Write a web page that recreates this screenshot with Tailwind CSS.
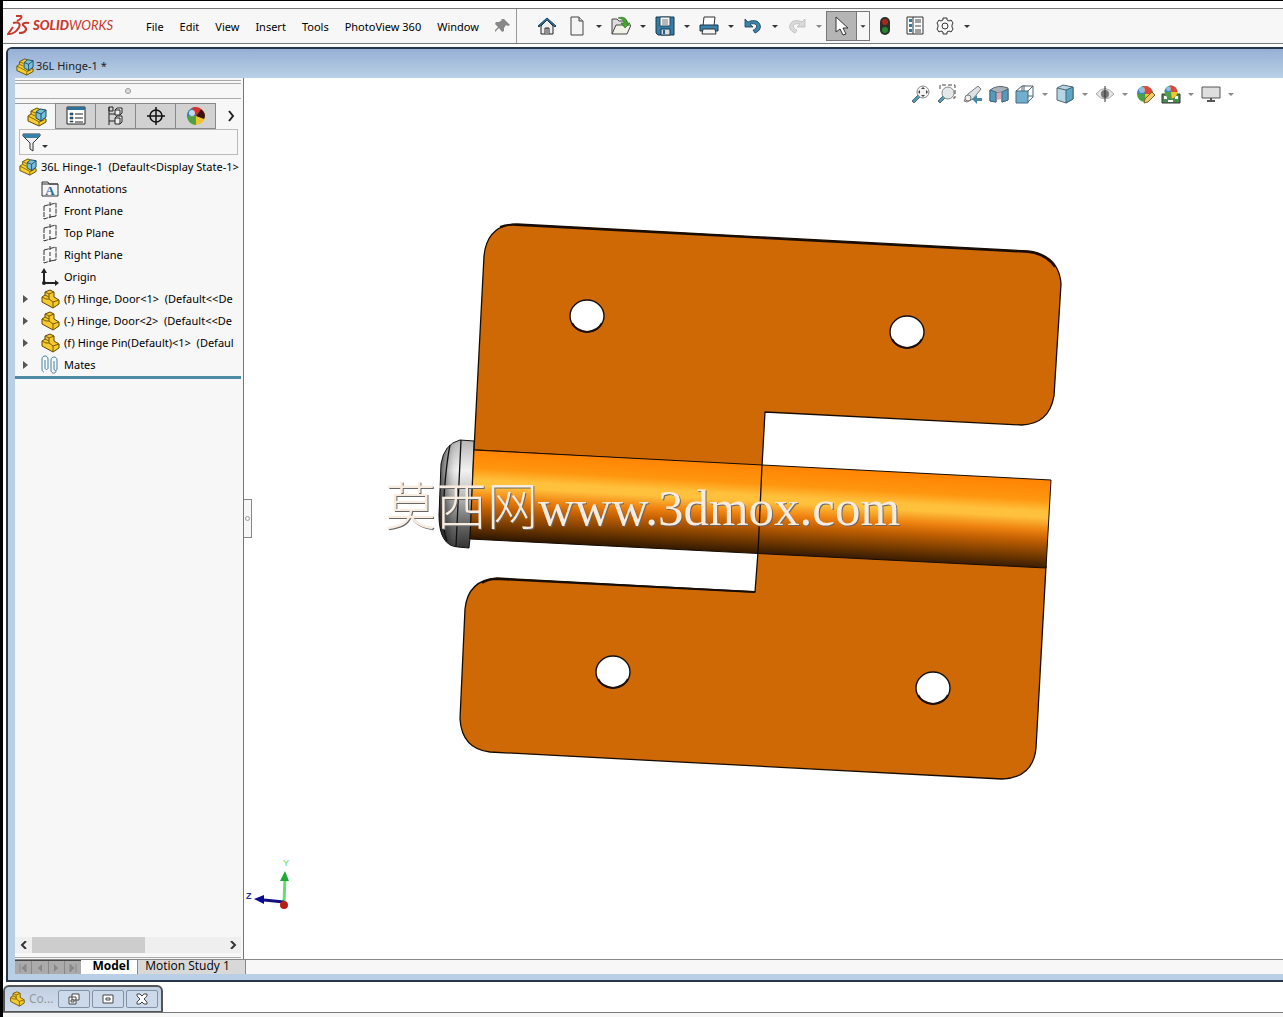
<!DOCTYPE html>
<html lang="en">
  <head>
    <meta charset="UTF-8" />
    <meta name="viewport" content="width=device-width, initial-scale=1.0" />
    <title>SOLIDWORKS - 36L Hinge-1</title>
    <script src="https://cdn.jsdelivr.net/npm/@tailwindcss/browser@4"></script>
  </head>
  <body class="flex h-screen flex-col overflow-hidden border-t border-l-[3px] border-black bg-white font-['Noto_Sans','Open_Sans',sans-serif] text-[11px] text-black">
    <!-- Shared icon shapes -->
    <svg class="hidden">
      <symbol id="caret" viewBox="0 0 14 20">
        <path d="M4 9h6l-3 3z" fill="currentColor" />
      </symbol>
      <symbol id="part" viewBox="0 0 20 20">
        <path d="M2 8l3-2V3l5-2 4 2v5l5 3v4l-6 4L2 13z" fill="#f6c92c" stroke="#5f4700" stroke-linejoin="round" />
        <path d="M5 3l4 2 5-2M9 5v5l4 3 6-2M2 8l4 2 3 0M13 13v6M5 6l4 2" fill="none" stroke="#7a5c00" />
      </symbol>
      <symbol id="assembly" viewBox="0 0 20 20">
        <path d="M1 9l3-2V4l6-3 4 2v8l5 1v3l-7 4L1 14z" fill="#f8cf2e" stroke="#5f4700" stroke-linejoin="round" />
        <path d="M1 9l6 3 5 3 5-2M12 15v4M4 4l4 2M4 7l4 2" fill="none" stroke="#866500" />
        <path d="M9 5l4-3 6 1v7l-5 4-5-3z" fill="#79c0dd" stroke="#174a68" stroke-linejoin="round" />
        <path d="M9 5l5 2 5-4M14 7v7" fill="none" stroke="#174a68" />
      </symbol>
      <symbol id="plane" viewBox="0 0 20 20">
        <path d="M4 5l12-3v13M4 5v13l6-2" fill="none" stroke="#333" stroke-dasharray="5 1" />
        <path d="M16 15l-6 1" stroke="#333" />
        <path d="M10 1v18" stroke="#333" stroke-dasharray="4 2" />
      </symbol>
      <symbol id="ball" viewBox="0 0 20 20">
        <circle cx="10" cy="10" r="8" fill="#4ba045" />
        <path d="M10 10L2 10A8 8 0 0 1 9 2z" fill="#3d86c6" />
        <path d="M10 10L9 2a8 8 0 0 1 9 8z" fill="#e2483a" />
        <path d="M10 10h8a8 8 0 0 1-7 8z" fill="#f3c72b" />
        <circle cx="7" cy="6" r="3" fill="#fff" fill-opacity=".45" />
      </symbol>
    </svg>

    <!-- Menu bar -->
    <header class="mt-[7px] flex h-9 shrink-0 items-stretch border-y border-[#777] bg-[#f7f7f7]">
      <div class="flex w-[135px] items-center pl-1">
        <svg class="h-6 w-6 text-[#c8382d]" viewBox="0 0 24 24" fill="none" stroke="currentColor" stroke-width="2">
          <path d="M9 2h5q2 2-4 5" />
          <path d="M6 9c8-2 8 3 4 7-3 4-6 4-9 4l5-7" />
          <path d="M22 9c-5-1-8 1-5 3 4 3 2 7-5 7" />
        </svg>
        <span class="ml-[2px] font-['Lato',sans-serif] text-[13px] text-[#c8382d] italic"><b class="font-black">SOLID</b>WORKS</span>
      </div>
      <nav class="flex items-center gap-4 pt-[2px] pl-2">
        <a href="#">File</a>
        <a href="#">Edit</a>
        <a href="#">View</a>
        <a href="#">Insert</a>
        <a href="#">Tools</a>
        <a href="#">PhotoView 360</a>
        <a href="#">Window</a>
      </nav>
      <button class="ml-3 flex w-[25px] items-center justify-center" aria-label="Pin menu">
        <svg class="h-4 w-4" viewBox="0 0 16 16" fill="#888"><path d="M9 1l6 6-2 1-2-1-2 3 0 3-2 1-3-4-4 4-1-1 4-4-3-3 1-2 3 0 3-2-1-1z" /></svg>
      </button>
      <div class="flex items-center border-l border-[#999] pl-[15px] text-[#333]">
        <button class="flex w-[30px] justify-center" aria-label="Home">
          <svg class="h-5 w-5" viewBox="0 0 20 20"><path d="M4 10v8h12v-8l-6-6z" fill="#eee" stroke="#222" /><path d="M8 18v-6h4v6M10 12v6" fill="#fff" stroke="#222" /><path d="M1 10l9-8 9 8-1 1-8-7-8 7z" fill="#367ca8" stroke="#173f59" /></svg>
        </button>
        <button class="flex w-[30px] justify-center" aria-label="New">
          <svg class="h-5 w-5" viewBox="0 0 20 20"><path d="M4 1h8l4 4v14H4z" fill="#f4f4f4" stroke="#444" /><path d="M12 1v4h4" fill="#ccc" stroke="#444" /></svg>
        </button>
        <button class="w-[14px]" aria-label="New options"><svg class="h-5 w-[14px]"><use href="#caret" /></svg></button>
        <button class="flex w-[30px] justify-center" aria-label="Open">
          <svg class="h-5 w-5" viewBox="0 0 20 20"><path d="M1 18V3h5l2 2h8v4" fill="#ddd" stroke="#444" /><path d="M1 18l4-9h15l-4 9z" fill="#f1f1e8" stroke="#444" /><path d="M7 2c5-2 9 0 9 5h3l-5 5-4-5h3c0-3-2-4-6-5z" fill="#48a52d" stroke="#1d6b15" stroke-width=".6" /></svg>
        </button>
        <button class="w-[14px]" aria-label="Open options"><svg class="h-5 w-[14px]"><use href="#caret" /></svg></button>
        <button class="flex w-[30px] justify-center" aria-label="Save">
          <svg class="h-5 w-5" viewBox="0 0 20 20"><path d="M1 1h18v18H3l-2-2z" fill="#337da6" stroke="#17384c" /><path d="M5 1h10v9H5z" fill="#f7f7f7" stroke="#294658" /><path d="M7 4h6M7 6h6M7 8h6" stroke="#777" /><path d="M6 13h9v6H6z" fill="#d8dfe3" stroke="#17384c" /><path d="M8 14h2v4H8z" fill="#245e80" /></svg>
        </button>
        <button class="w-[14px]" aria-label="Save options"><svg class="h-5 w-[14px]"><use href="#caret" /></svg></button>
        <button class="flex w-[30px] justify-center" aria-label="Print">
          <svg class="h-5 w-5" viewBox="0 0 20 20"><path d="M5 1h11l-1 9H4z" fill="#fff" stroke="#333" /><path d="M1 9h18v6H1z" fill="#3b84ad" stroke="#17384c" /><path d="M4 13h12l1 5H3z" fill="#f5f5f5" stroke="#333" /></svg>
        </button>
        <button class="w-[14px]" aria-label="Print options"><svg class="h-5 w-[14px]"><use href="#caret" /></svg></button>
        <button class="flex w-[30px] justify-center" aria-label="Undo">
          <svg class="h-5 w-5" viewBox="0 0 20 20"><path d="M2 3v8h8L7 8c5-1 8 1 6 4-1 1-2 2-3 2l2 3c5-2 7-6 4-10-2-3-7-3-11-1z" fill="#3b84ad" stroke="#17384c" stroke-width=".8" /></svg>
        </button>
        <button class="w-[14px]" aria-label="Undo options"><svg class="h-5 w-[14px]"><use href="#caret" /></svg></button>
        <button class="flex w-[30px] justify-center" aria-label="Redo" disabled>
          <svg class="h-5 w-5" viewBox="0 0 20 20"><path d="M18 3v8h-8l3-3c-5-1-8 1-6 4 1 1 2 2 3 2l-2 3c-5-2-7-6-4-10 2-3 7-3 11-1z" fill="#d9d9d9" stroke="#bbb" stroke-width=".8" /></svg>
        </button>
        <button class="w-[14px] text-[#888]" aria-label="Redo options"><svg class="h-5 w-[14px]"><use href="#caret" /></svg></button>
        <div class="flex h-[30px] w-11 items-center border border-[#777]">
          <button class="flex h-full w-[30px] items-center justify-center border-r border-[#777] bg-[#b5b5b5]" aria-label="Select">
            <svg class="h-5 w-5" viewBox="0 0 20 20"><path d="M5 1v15l4-3 3 6 3-1-3-6h5z" fill="#fff" stroke="#333" /></svg>
          </button>
          <button class="w-3" aria-label="Select options"><svg class="h-5 w-3"><use href="#caret" /></svg></button>
        </div>
        <button class="flex w-[30px] justify-center" aria-label="Rebuild">
          <svg class="h-5 w-5" viewBox="0 0 20 20"><rect x="5" y="1" width="10" height="18" rx="5" fill="#2c3028" /><circle cx="10" cy="6" r="3" fill="#a62a22" /><circle cx="10" cy="14" r="3" fill="#288335" /></svg>
        </button>
        <button class="flex w-[30px] justify-center" aria-label="File properties">
          <svg class="h-5 w-5" viewBox="0 0 20 20"><path d="M2 1h16v17H2zM8 1v17" fill="#fafafa" stroke="#333" /><path d="M10 4h6M10 6h6M10 10h6M10 14h6M10 16h6" stroke="#444" /><path d="M4 3h3v3H4zM4 8h3v3H4zM4 13h3v3H4z" fill="#2f7ca8" /></svg>
        </button>
        <button class="flex w-[30px] justify-center" aria-label="Options">
          <svg class="h-5 w-5" viewBox="0 0 20 20" fill="#f7f7f7" stroke="#333"><path d="M8 2h4v2l2 1 2-1 2 3-1 2v2l1 2-2 3-2-1-2 1v2H8v-2l-2-1-2 1-2-3 1-2V9L2 7l2-3 2 1 2-1z" stroke-linejoin="round" /><circle cx="10" cy="10" r="3" /></svg>
        </button>
        <button class="w-[14px]" aria-label="Option list"><svg class="h-5 w-[14px]"><use href="#caret" /></svg></button>
      </div>
    </header>

    <!-- Document window -->
    <main class="mt-[3px] ml-[3px] flex min-h-0 flex-1 flex-col rounded-tl-md border-t-2 border-b-2 border-l-2 border-[#26364c] bg-[#b9cfe6] pb-[6px] pl-[7px]">
      <div class="-ml-[7px] flex h-[29px] shrink-0 items-center gap-[2px] rounded-tl bg-linear-to-b from-[#96b0d5] to-[#bad0e6] pt-[6px] pl-2">
        <svg class="h-[18px] w-[18px]"><use href="#assembly" /></svg>
        <h1 class="text-[#222]">36L Hinge-1 *</h1>
      </div>

      <div class="flex min-h-0 flex-1">
        <!-- Feature manager -->
        <aside class="flex w-[229px] shrink-0 flex-col border-r border-[#777] bg-[#f7f7f7] pt-[2px] pr-[2px]">
          <div class="h-1 shrink-0 border-y border-[#aaa]"></div>
          <div class="flex h-[15px] shrink-0 items-center justify-center border-b border-[#aaa]">
            <span class="h-[6px] w-[6px] rounded-full border border-[#999] bg-[#ddd]"></span>
          </div>
          <div class="mt-1 flex h-[26px] shrink-0">
            <button class="flex w-10 items-center justify-center border-t border-[#999] pl-1" aria-label="Feature tree">
              <svg class="h-5 w-5"><use href="#assembly" /></svg>
            </button>
            <button class="flex w-[41px] items-center justify-center border border-[#888] bg-[#d2d2d2]" aria-label="Properties">
              <svg class="h-5 w-5" viewBox="0 0 20 20"><path d="M1 1h18v17H1z" fill="#fff" stroke="#222" /><path d="M1 1h18v3H1z" fill="#2d7097" /><path d="M4 7h3v2H4zM4 11h3v2H4zM4 15h3v1H4z" fill="#2d7097" stroke="#222" stroke-width=".5" /><path d="M9 8h8M9 12h8M9 16h8" stroke="#222" /></svg>
            </button>
            <button class="flex w-10 items-center justify-center border-y border-r border-[#888] bg-[#d2d2d2]" aria-label="Configurations">
              <svg class="h-5 w-5" viewBox="0 0 20 20" fill="none" stroke="#222"><path d="M3 1h4v4H3zM3 1v18M3 15h6M3 8h6" /><path d="M9 4l2-2h5v5l-2 2H9zM9 12l2-2h5v6l-2 2H9zM9 4h5v5M9 12h5v6" fill="#eee" /></svg>
            </button>
            <button class="flex w-10 items-center justify-center border-y border-r border-[#888] bg-[#d2d2d2]" aria-label="Dimensions">
              <svg class="h-5 w-5" viewBox="0 0 20 20" fill="none" stroke="#111" stroke-width="1.5"><circle cx="10" cy="10" r="6" /><path d="M10 1v18M1 10h18" /></svg>
            </button>
            <button class="flex w-10 items-center justify-center border-y border-r border-[#888] bg-[#d2d2d2]" aria-label="Display">
              <svg class="h-5 w-5" viewBox="0 0 20 20"><circle cx="10" cy="10" r="9" fill="#efc52e" /><path d="M10 10L1 11A9 9 0 0 1 9 1z" fill="#3880b6" /><path d="M10 10L6 2c3-2 7-1 9 1z" fill="#d82f2f" /><path d="M10 10l5-7c4 3 5 7 3 10z" fill="#3a1315" /><path d="M10 10L1 11c1 5 5 8 9 8z" fill="#4da144" /><circle cx="6" cy="7" r="3" fill="#fff" fill-opacity=".7" /></svg>
            </button>
            <button class="flex flex-1 items-center justify-center pl-1" aria-label="More tabs">
              <svg class="h-3 w-3" viewBox="0 0 12 12" fill="none" stroke="#222" stroke-width="2"><path d="M4 1l4 5-4 5" /></svg>
            </button>
          </div>
          <label class="mx-1 mr-[3px] flex h-[26px] shrink-0 items-center border border-[#bbb] pl-[2px]">
            <svg class="h-5 w-5" viewBox="0 0 20 20"><path d="M1 2h17v2l-7 7v8l-3-2v-6L1 4z" fill="#eee" stroke="#333" /><path d="M1 2h17v2l-2 2H3L1 4z" fill="#397fa6" /></svg>
            <svg class="-ml-1 mt-2 h-5 w-[14px] text-[#333]"><use href="#caret" /></svg>
            <input class="min-w-0 flex-1 outline-none" type="text" aria-label="Filter tree" />
          </label>
          <ul class="mt-px min-h-0 flex-1 overflow-hidden leading-[22px] whitespace-nowrap">
            <li class="flex h-[22px] items-center gap-1 pl-1"><svg class="h-[18px] w-[18px] shrink-0"><use href="#assembly" /></svg><span>36L Hinge-1&nbsp; (Default&lt;Display State-1&gt;</span></li>
            <li class="flex h-[22px] items-center gap-1 pl-[25px]">
              <svg class="h-5 w-5 shrink-0" viewBox="0 0 20 20"><path d="M2 17V3h6l1 2h9v12z" fill="#f5f5f5" stroke="#333" /><path d="M2 5h16" stroke="#333" /><text x="10" y="16" text-anchor="middle" font-family="Liberation Serif, serif" font-size="13" font-weight="bold" fill="#286b9b">A</text></svg>Annotations
            </li>
            <li class="flex h-[22px] items-center gap-1 pl-[25px]"><svg class="h-5 w-5 shrink-0"><use href="#plane" /></svg>Front Plane</li>
            <li class="flex h-[22px] items-center gap-1 pl-[25px]"><svg class="h-5 w-5 shrink-0"><use href="#plane" /></svg>Top Plane</li>
            <li class="flex h-[22px] items-center gap-1 pl-[25px]"><svg class="h-5 w-5 shrink-0"><use href="#plane" /></svg>Right Plane</li>
            <li class="flex h-[22px] items-center gap-1 pl-[25px]">
              <svg class="h-5 w-5 shrink-0" viewBox="0 0 20 20" fill="#222"><path d="M3 4h2v11h11v2H3z" /><path d="M4 1l3 5H1zM19 16l-4-3v6z" /><circle cx="4" cy="16" r="2" /></svg>Origin
            </li>
            <li class="flex h-[22px] items-center gap-1 pl-2"><button class="w-[13px] shrink-0" aria-label="Expand"><svg class="h-2 w-[5px]" viewBox="0 0 5 8"><path d="M0 0l5 4-5 4z" fill="#555" /></svg></button><svg class="h-5 w-5 shrink-0"><use href="#part" /></svg>(f) Hinge, Door&lt;1&gt;&nbsp; (Default&lt;&lt;De</li>
            <li class="flex h-[22px] items-center gap-1 pl-2"><button class="w-[13px] shrink-0" aria-label="Expand"><svg class="h-2 w-[5px]" viewBox="0 0 5 8"><path d="M0 0l5 4-5 4z" fill="#555" /></svg></button><svg class="h-5 w-5 shrink-0"><use href="#part" /></svg>(-) Hinge, Door&lt;2&gt;&nbsp; (Default&lt;&lt;De</li>
            <li class="flex h-[22px] items-center gap-1 pl-2"><button class="w-[13px] shrink-0" aria-label="Expand"><svg class="h-2 w-[5px]" viewBox="0 0 5 8"><path d="M0 0l5 4-5 4z" fill="#555" /></svg></button><svg class="h-5 w-5 shrink-0"><use href="#part" /></svg>(f) Hinge Pin(Default)&lt;1&gt;&nbsp; (Defaul</li>
            <li class="flex h-[22px] items-center gap-1 pl-2">
              <button class="w-[13px] shrink-0" aria-label="Expand"><svg class="h-2 w-[5px]" viewBox="0 0 5 8"><path d="M0 0l5 4-5 4z" fill="#555" /></svg></button>
              <svg class="h-5 w-5 shrink-0" viewBox="0 0 20 20" fill="none" stroke="#47839d"><path d="M5 5v8c0 2 3 2 3 0V4c0-4-6-4-6 0v10c0 2 1 3 2 3" /><path d="M14 6v8c0 2 3 2 3 0V5c0-4-6-4-6 0v10c0 4 5 4 5 1" /></svg>Mates
            </li>
            <li class="h-[3px] bg-[#4c8aa5]"></li>
          </ul>
          <div class="mb-1 flex h-4 shrink-0 items-center bg-[#efefef]">
            <button class="flex h-full w-[17px] items-center justify-center" aria-label="Scroll left"><svg class="h-2 w-2" viewBox="0 0 8 8" fill="none" stroke="#333" stroke-width="2"><path d="M6 0L2 4l4 4" /></svg></button>
            <div class="h-full w-[113px] bg-[#cdcdcd]"></div>
            <button class="ml-auto flex h-full w-4 items-center justify-center" aria-label="Scroll right"><svg class="h-2 w-2" viewBox="0 0 8 8" fill="none" stroke="#333" stroke-width="2"><path d="M2 0l4 4-4 4" /></svg></button>
          </div>
          <div class="h-[2px] shrink-0 border-t border-[#aaa]"></div>
        </aside>

        <!-- Graphics area -->
        <section class="relative min-w-0 flex-1 bg-white">
          <svg class="h-full w-full" viewBox="244 78 1039 881">
            <defs>
              <linearGradient id="barrel" gradientUnits="userSpaceOnUse" x1="474" y1="450" x2="469" y2="539">
                <stop offset="0" stop-color="#ff8503" />
                <stop offset=".2" stop-color="#ff960f" />
                <stop offset=".33" stop-color="#ffc03c" />
                <stop offset=".4" stop-color="#ffc03c" />
                <stop offset=".54" stop-color="#ef8210" />
                <stop offset=".65" stop-color="#c46103" />
                <stop offset=".82" stop-color="#7a3d00" />
                <stop offset="1" stop-color="#2b1500" />
              </linearGradient>
              <linearGradient id="pin" x1="0" y1="0" x2="0" y2="1">
                <stop offset="0" stop-color="#b5b5b5" />
                <stop offset=".28" stop-color="#f2f2f2" />
                <stop offset=".5" stop-color="#c0c0c0" />
                <stop offset=".72" stop-color="#777" />
                <stop offset="1" stop-color="#333" />
              </linearGradient>
              <linearGradient id="pin-side">
                <stop offset="0" stop-color="#000" stop-opacity=".7" />
                <stop offset=".3" stop-color="#222" stop-opacity=".2" />
                <stop offset=".6" stop-color="#fff" stop-opacity="0" />
              </linearGradient>
            </defs>
            <!-- leaves -->
            <g fill="#cf6905" stroke="#160b00" stroke-width="1.3" stroke-linejoin="round">
              <path d="M474 450L484 256Q487 225 517 224L1028 251Q1059 255 1061 284L1054 396Q1049 424 1022 425L765 412L762 466z" />
              <path d="M758 552L755 592L497 578Q468 580 465 609L460 719Q462 749 490 752L1002 779Q1033 778 1036 748L1046 566z" />
            </g>
            <g fill="none" stroke="#180c06" stroke-width="2">
              <path d="M500 227Q508 224 517 225L1028 252Q1046 254 1055 267" />
              <path d="M482 583Q488 579 497 579L755 592" />
            </g>
            <g fill="#fff" stroke="#111" stroke-width="1.4">
              <ellipse cx="587" cy="316" rx="17" ry="16" />
              <ellipse cx="907" cy="332" rx="17" ry="16" />
              <ellipse cx="613" cy="672" rx="17" ry="16" />
              <ellipse cx="933" cy="688" rx="17" ry="16" />
            </g>
            <g fill="none" stroke="#1d1008" stroke-width="2">
              <path d="M572 323q4 8 15 9q11-1 15-9M892 339q4 8 15 9q11-1 15-9M598 679q4 8 15 9q11-1 15-9M918 695q4 8 15 9q11-1 15-9" />
            </g>
            <!-- pin head and barrel -->
            <path d="M474 441L460 440Q444 444 441 464L439 515Q439 546 458 547L469 548L470 538z" fill="url(#pin)" stroke="#111" />
            <path d="M474 441L460 440Q444 444 441 464L439 515Q439 546 458 547L469 548L470 538z" fill="url(#pin-side)" />
            <path d="M461 440L456 547M450 445Q445 470 443 515Q443 531 447 541" fill="none" stroke="#111" stroke-width="1.3" />
            <path d="M474 450L1051 480L1046 568L470 539z" fill="url(#barrel)" stroke="#160b00" />
            <path d="M762 465L758 553" stroke="#160b00" stroke-width="1.3" />
            <!-- orientation triad -->
            <path d="M284 902l1-24" stroke="#62e06e" stroke-width="3" />
            <path d="M285 871l4 10h-9z" fill="#1dab35" />
            <path d="M284 902l-20-2" stroke="#10107f" stroke-width="3" />
            <path d="M254 899l10-4v9z" fill="#0b0b91" />
            <circle cx="284" cy="905" r="4" fill="#b51e16" />
            <text x="283" y="866" font-family="Liberation Sans, sans-serif" font-size="9" fill="#55e063">Y</text>
            <text x="246" y="899" font-family="Liberation Sans, sans-serif" font-size="9" font-weight="bold" fill="#2929a0">Z</text>
            <!-- watermark -->
            <g font-family="'Liberation Serif','Noto Sans CJK SC',serif" font-size="51" font-weight="300">
              <text x="386" y="526" fill="#666">莫西网www.3dmox.com</text>
              <text x="385" y="525" fill="#f8ebdf">莫西网www.3dmox.com</text>
            </g>
          </svg>

          <!-- View toolbar -->
          <div class="absolute top-[6px] right-[45px] flex h-5 items-center text-[#888]">
            <button class="flex w-[26px] justify-center" aria-label="Zoom to fit"><svg class="h-5 w-5" viewBox="0 0 20 20"><path d="M1 17l6-6 2 2-6 6z" fill="#5798ba" stroke="#476a7c" /><circle cx="12" cy="8" r="6" fill="#f3f3f3" stroke="#888" /><path d="M12 3l2 2h-4zM12 13l2-2h-4zM7 8l2-2v4zM17 8l-2-2v4z" fill="#444" /></svg></button>
            <button class="flex w-[26px] justify-center" aria-label="Zoom to area"><svg class="h-5 w-5" viewBox="0 0 20 20"><path d="M1 17l6-6 2 2-6 6z" fill="#5798ba" stroke="#476a7c" /><circle cx="11" cy="9" r="6" fill="#e4e8e8" stroke="#888" /><path d="M3 5V1h15v13h-2" fill="none" stroke="#444" stroke-dasharray="4 2" /></svg></button>
            <button class="flex w-[26px] justify-center" aria-label="Previous view"><svg class="h-5 w-5" viewBox="0 0 20 20"><path d="M1 17l4-7L15 2l3 3-8 10-6 3z" fill="#dce1e3" stroke="#777" /><circle cx="5" cy="14" r="3" fill="#eee" stroke="#777" /><path d="M9 15l5-4v3h5v3h-5v3z" fill="#4887ac" /></svg></button>
            <button class="flex w-[26px] justify-center" aria-label="Section view"><svg class="h-5 w-5" viewBox="0 0 20 20"><path d="M1 6q8-6 18-2v12l-6 2V8l-6 1v9l-6-1z" fill="#a8b2b8" stroke="#59666e" /><path d="M7 9l6-1v7l-6 1z" fill="#d9a9b2" /><path d="M1 6l6 2v10l-6-1zM13 8l6-3v11l-6 2z" fill="#559abd" stroke="#42687c" /></svg></button>
            <button class="flex w-[26px] justify-center" aria-label="View orientation"><svg class="h-5 w-5" viewBox="0 0 20 20"><path d="M1 7l6-5h11v11l-5 5M13 7l5-5M7 2v5M1 12h17M9 1v17" fill="#fff" stroke="#52616b" /><path d="M1 7h12v12H1z" fill="#70b0ce" stroke="#426980" /></svg></button>
            <button class="w-[14px]" aria-label="Orientation options"><svg class="h-5 w-[14px]"><use href="#caret" /></svg></button>
            <button class="flex w-[26px] justify-center" aria-label="Display style"><svg class="h-5 w-5" viewBox="0 0 20 20"><path d="M2 4l6-3 10 2v12l-7 4-9-3z" fill="#b5d5e4" stroke="#55646e" /><path d="M11 6l7-3v12l-7 4z" fill="#5ea5c6" stroke="#3c6579" /><path d="M2 4l9 2" stroke="#55646e" /></svg></button>
            <button class="w-[14px]" aria-label="Display options"><svg class="h-5 w-[14px]"><use href="#caret" /></svg></button>
            <button class="flex w-[26px] justify-center" aria-label="Hide or show items"><svg class="h-5 w-5" viewBox="0 0 20 20"><path d="M1 10q9-11 18 0-9 10-18 0z" fill="#e5e5e5" stroke="#aaa" /><circle cx="10" cy="10" r="4" fill="#777" /><path d="M10 2v16" stroke="#333" /></svg></button>
            <button class="w-[14px]" aria-label="Visibility options"><svg class="h-5 w-[14px]"><use href="#caret" /></svg></button>
            <button class="flex w-[26px] justify-center" aria-label="Edit appearance"><svg class="h-5 w-5" viewBox="0 0 20 20"><use href="#ball" /><path d="M9 19l1-4 7-7 3 3-7 7z" fill="#efcb6b" stroke="#7b5e27" /></svg></button>
            <button class="flex w-[26px] justify-center" aria-label="Apply scene"><svg class="h-5 w-5" viewBox="0 0 20 20"><path d="M1 10h18v9H1z" fill="#4b8c53" stroke="#333" /><path d="M3 12h3v3H3zM14 12h3v3h-3zM7 16h5v2H7z" fill="#fff" /><use href="#ball" x="2" y="0" width="16" height="16" /></svg></button>
            <button class="w-[14px]" aria-label="Scene options"><svg class="h-5 w-[14px]"><use href="#caret" /></svg></button>
            <button class="flex w-[26px] justify-center" aria-label="View settings"><svg class="h-5 w-5" viewBox="0 0 20 20"><path d="M1 3h18v11H1z" fill="#dedede" stroke="#555" /><path d="M10 14v3M6 17h8" stroke="#555" stroke-width="2" /></svg></button>
            <button class="w-[14px]" aria-label="View setting options"><svg class="h-5 w-[14px]"><use href="#caret" /></svg></button>
          </div>

          <!-- Panel splitter handle -->
          <button class="absolute top-[421px] left-0 flex h-[39px] w-2 items-center justify-center border-y border-r border-[#888] bg-[#f7f7f7]" aria-label="Collapse panel">
            <span class="h-[5px] w-[5px] rounded-full border border-[#999]"></span>
          </button>
        </section>
      </div>

      <!-- Model tabs -->
      <div class="flex h-[15px] shrink-0 border-t border-[#888] bg-[#f7f7f7]">
        <div class="flex w-[66px] border-t border-[#444] bg-[#aaa] text-[#888]">
          <button class="flex flex-1 items-center justify-center border-r border-[#888]" aria-label="First tab"><svg class="h-2 w-2" viewBox="0 0 8 8"><path d="M1 0v8M7 0L3 4l4 4z" fill="currentColor" stroke="currentColor" /></svg></button>
          <button class="flex flex-1 items-center justify-center border-r border-[#888]" aria-label="Previous tab"><svg class="h-2 w-2" viewBox="0 0 8 8"><path d="M6 0L2 4l4 4z" fill="currentColor" /></svg></button>
          <button class="flex flex-1 items-center justify-center border-r border-[#888]" aria-label="Next tab"><svg class="h-2 w-2" viewBox="0 0 8 8"><path d="M2 0l4 4-4 4z" fill="currentColor" /></svg></button>
          <button class="flex flex-1 items-center justify-center" aria-label="Last tab"><svg class="h-2 w-2" viewBox="0 0 8 8"><path d="M7 0v8M1 0l4 4-4 4z" fill="currentColor" stroke="currentColor" /></svg></button>
        </div>
        <button class="w-14 bg-white pb-[2px] pl-1 font-['Open_Sans',sans-serif] text-xs leading-3 font-bold">Model</button>
        <button class="w-[109px] border-x border-[#888] bg-[#d8d8d8] pr-2 pb-[2px] font-['Open_Sans',sans-serif] text-xs leading-3 whitespace-nowrap">Motion Study 1</button>
      </div>
    </main>

    <!-- Minimized document -->
    <footer class="flex h-[35px] shrink-0 flex-col pt-[3px]">
      <div class="flex h-7 w-40 shrink-0 items-center rounded-t-md border-2 border-[#555] bg-linear-to-b from-[#c1cfe2] to-[#d3dfed] pl-1">
        <svg class="h-4 w-4 shrink-0"><use href="#part" /></svg>
        <span class="w-[33px] pl-1 text-xs text-[#999]">Co...</span>
        <div class="flex gap-[2px]">
          <button class="flex h-[18px] w-8 items-center justify-center rounded-xs border border-[#8492a8] bg-[#cbd9ea]" aria-label="Restore"><svg class="h-3 w-3" viewBox="0 0 12 12" fill="#fff" stroke="#444"><path d="M4 1h7v6H4zM1 4h7v7H1z" /><path d="M3 7h3v2H3z" /></svg></button>
          <button class="flex h-[18px] w-8 items-center justify-center rounded-xs border border-[#8492a8] bg-[#cbd9ea]" aria-label="Maximize"><svg class="h-3 w-3" viewBox="0 0 12 12" fill="#fff" stroke="#444"><path d="M1 2h10v8H1zM4 5h4v2H4z" /></svg></button>
          <button class="flex h-[18px] w-8 items-center justify-center rounded-xs border border-[#8492a8] bg-[#cbd9ea]" aria-label="Close"><svg class="h-3 w-3" viewBox="0 0 12 12"><path d="M1 1h3l2 2 2-2h3v2L8 6l3 3v2H8L6 9l-2 2H1V9l3-3-3-3z" fill="#fff" stroke="#444" /></svg></button>
        </div>
      </div>
      <div class="-mt-px flex-1 border-t border-[#777] bg-[#f7f7f7]"></div>
    </footer>
  </body>
</html>
